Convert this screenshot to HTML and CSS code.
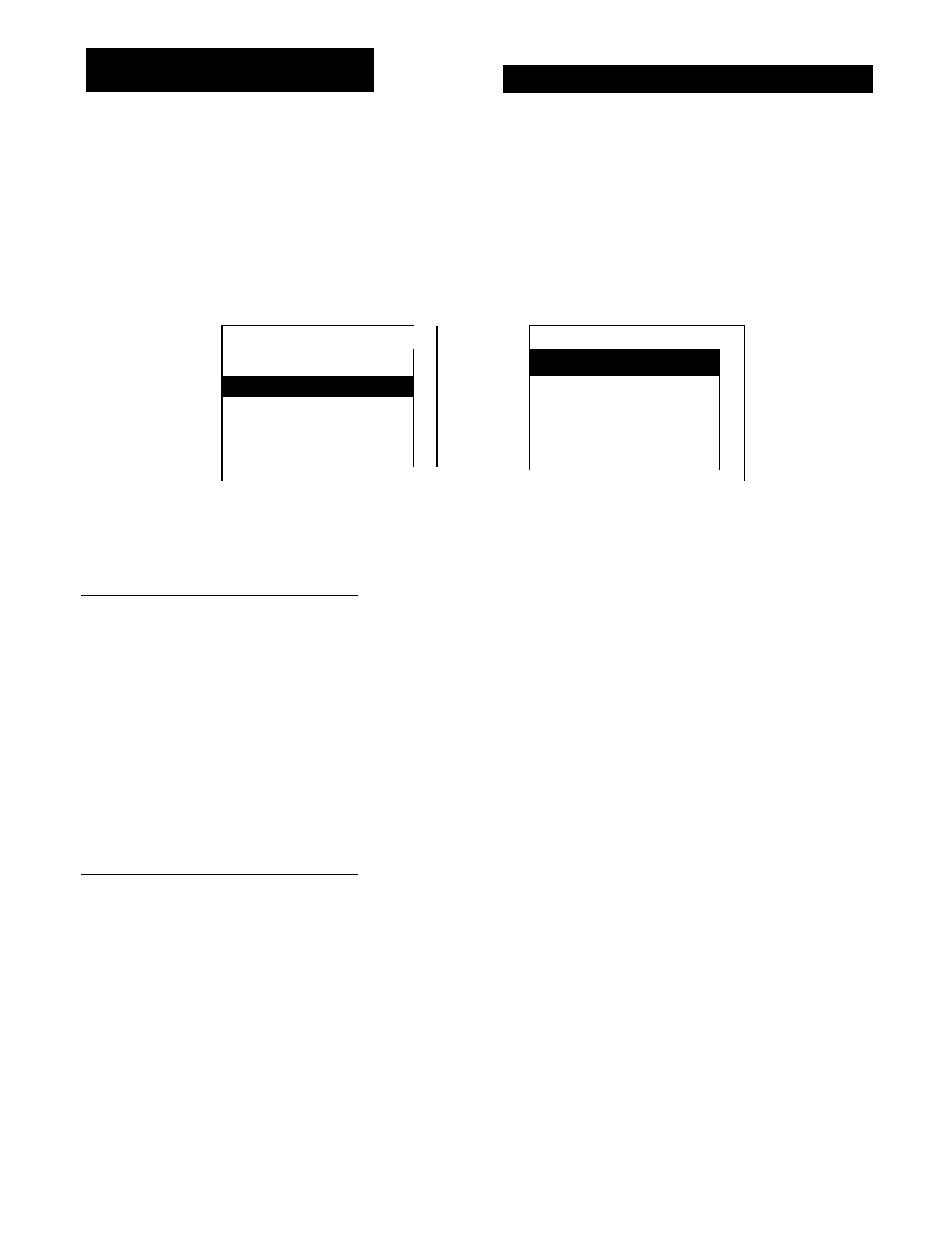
FILE: index.html
```html
<!DOCTYPE html>
<html lang="en">
<head>
<meta charset="UTF-8">
<meta name="viewport" content="width=device-width, initial-scale=1.0">
<title>Form</title>
<link rel="stylesheet" href="styles.css">
</head>
<body>

<div class="page">
    <div class="header">
        <div class="title-bar"></div>
        <div class="heading-bar"></div>
    </div>

    <div class="figures">
        <!-- list with scroll line on the right -->
        <div class="list-one">
            <div class="list-one-box">
                <div class="list-one-inner">
                    <div class="list-one-bar"></div>
                </div>
            </div>
            <div class="list-one-scroll"></div>
        </div>

        <!-- list with frame -->
        <div class="list-two">
            <div class="list-two-inner">
                <div class="list-two-col">
                    <div class="list-two-bar"></div>
                </div>
            </div>
        </div>
    </div>

    <div class="rule rule-first"></div>
    <div class="rule rule-second"></div>
</div>

</body>
</html>
```

FILE: styles.css
```css
body {
    margin: 0;
    padding: 0;
    background-color: #fff;
    font-family: "Liberation Sans", Arial, sans-serif;
}

.page {
    padding-top: 48px;
}

.header {
    display: flex;
    align-items: flex-start;
    gap: 129px;
    padding-left: 86px;
}

.title-bar {
    width: 288px;
    height: 44px;
    background-color: #000;
}

.heading-bar {
    width: 370px;
    height: 28px;
    margin-top: 17px;
    background-color: #000;
}

.figures {
    display: flex;
    align-items: flex-start;
    gap: 91px;
    margin-top: 232px;
    padding-left: 221px;
}

.list-one {
    display: flex;
    align-items: flex-start;
}

.list-one-box {
    box-sizing: border-box;
    width: 193px;
    height: 156px;
    border-left: 2px solid #000;
    border-top: 1px solid #000;
    padding-top: 23px;
}

.list-one-inner {
    box-sizing: border-box;
    height: 118px;
    border-right: 1px solid #000;
    padding-top: 27px;
}

.list-one-bar {
    height: 21px;
    margin-left: -2px;
    background-color: #000;
}

.list-one-scroll {
    width: 2px;
    height: 141px;
    margin-top: 1px;
    margin-left: 22px;
    background-color: #000;
}

.list-two {
    box-sizing: border-box;
    width: 216px;
    height: 156px;
    border-top: 1px solid #000;
    border-right: 1px solid #000;
}

.list-two-inner {
    box-sizing: border-box;
    width: 191px;
    height: 144px;
    border-left: 1px solid #000;
    padding-top: 23px;
}

.list-two-col {
    height: 121px;
    border-right: 1px solid #000;
}

.list-two-bar {
    height: 27px;
    margin-left: -1px;
    margin-right: -1px;
    background-color: #000;
}

.rule {
    width: 277px;
    margin-left: 81px;
    border-top: 1px solid #000;
}

.rule-first {
    margin-top: 114px;
}

.rule-second {
    margin-top: 278px;
}
```
